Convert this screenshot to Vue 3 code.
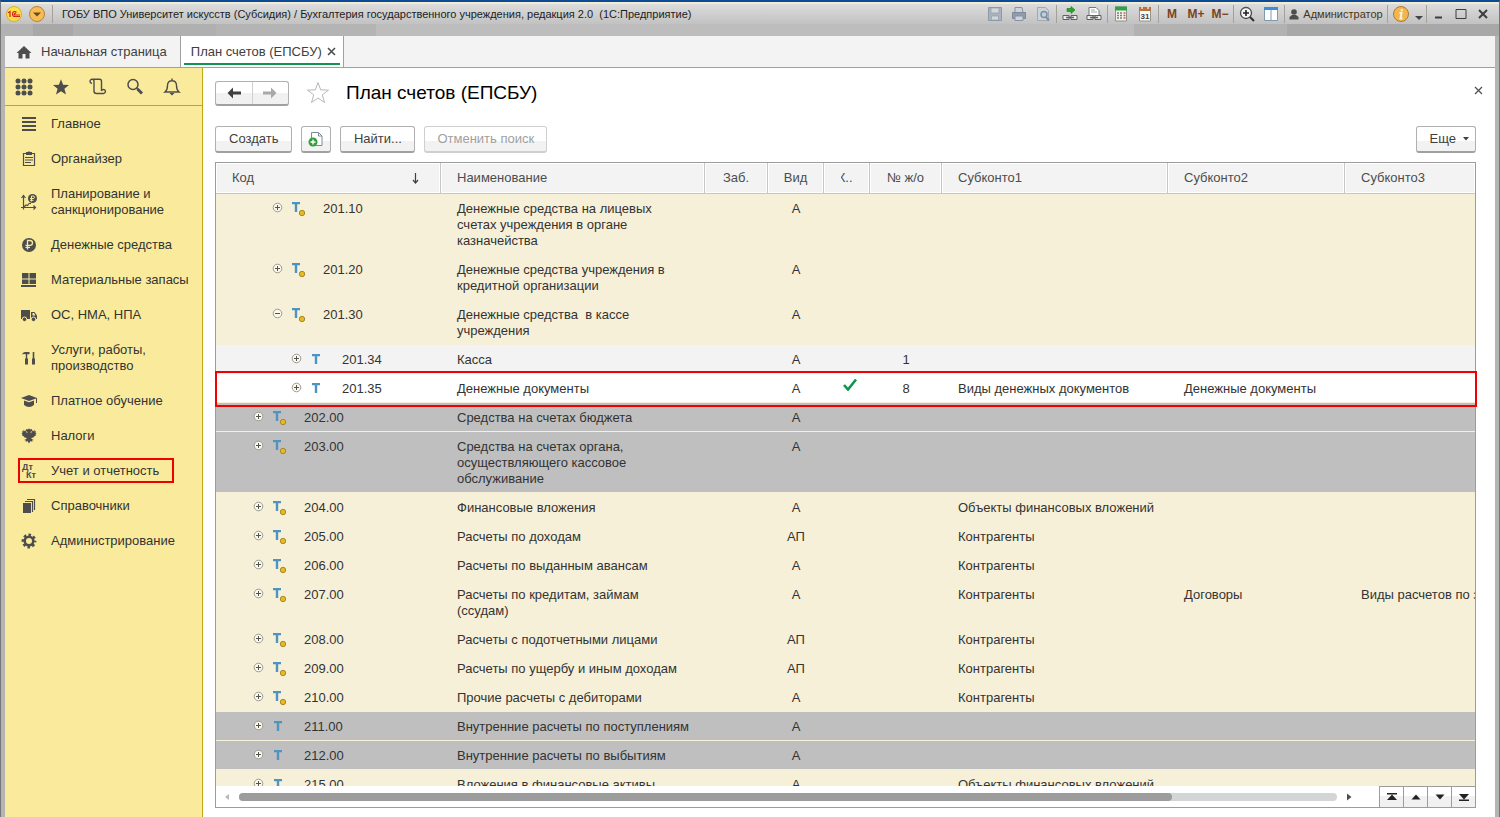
<script setup>
const sections = [
  { icon: 'menu', label: 'Главное' },
  { icon: 'clip', label: 'Органайзер' },
  { icon: 'plan', label: 'Планирование и\nсанкционирование' },
  { icon: 'ruble', label: 'Денежные средства' },
  { icon: 'stock', label: 'Материальные запасы' },
  { icon: 'truck', label: 'ОС, НМА, НПА' },
  { icon: 'tools', label: 'Услуги, работы,\nпроизводство' },
  { icon: 'edu', label: 'Платное обучение' },
  { icon: 'eagle', label: 'Налоги' },
  { icon: 'dtkt', label: 'Учет и отчетность', marked: true },
  { icon: 'books', label: 'Справочники' },
  { icon: 'gear', label: 'Администрирование' },
]

const rows = [
  { level: 3, coin: true, code: '201.10', name: 'Денежные средства на лицевых\nсчетах учреждения в органе\nказначейства', kind: 'А' },
  { level: 3, coin: true, code: '201.20', name: 'Денежные средства учреждения в\nкредитной организации', kind: 'А' },
  { level: 3, coin: true, open: true, code: '201.30', name: 'Денежные средства  в кассе\nучреждения', kind: 'А' },
  { level: 4, code: '201.34', name: 'Касса', kind: 'А', journal: '1', tone: 'light' },
  { level: 4, code: '201.35', name: 'Денежные документы', kind: 'А', check: true, journal: '8', sub1: 'Виды денежных документов', sub2: 'Денежные документы', tone: 'current' },
  { level: 2, coin: true, code: '202.00', name: 'Средства на счетах бюджета', kind: 'А', tone: 'grey' },
  { level: 2, coin: true, code: '203.00', name: 'Средства на счетах органа,\nосуществляющего кассовое\nобслуживание', kind: 'А', tone: 'grey' },
  { level: 2, coin: true, code: '204.00', name: 'Финансовые вложения', kind: 'А', sub1: 'Объекты финансовых вложений' },
  { level: 2, coin: true, code: '205.00', name: 'Расчеты по доходам', kind: 'АП', sub1: 'Контрагенты' },
  { level: 2, coin: true, code: '206.00', name: 'Расчеты по выданным авансам', kind: 'А', sub1: 'Контрагенты' },
  { level: 2, coin: true, code: '207.00', name: 'Расчеты по кредитам, займам\n(ссудам)', kind: 'А', sub1: 'Контрагенты', sub2: 'Договоры', sub3: 'Виды расчетов по займам' },
  { level: 2, coin: true, code: '208.00', name: 'Расчеты с подотчетными лицами', kind: 'АП', sub1: 'Контрагенты' },
  { level: 2, coin: true, code: '209.00', name: 'Расчеты по ущербу и иным доходам', kind: 'АП', sub1: 'Контрагенты' },
  { level: 2, coin: true, code: '210.00', name: 'Прочие расчеты с дебиторами', kind: 'А', sub1: 'Контрагенты' },
  { level: 2, code: '211.00', name: 'Внутренние расчеты по поступлениям', kind: 'А', tone: 'grey' },
  { level: 2, code: '212.00', name: 'Внутренние расчеты по выбытиям', kind: 'А', tone: 'grey' },
  { level: 2, code: '215.00', name: 'Вложения в финансовые активы', kind: 'А', sub1: 'Объекты финансовых вложений' },
]
</script>

<template>
  <div class="window">
    <header class="titlebar">
      <span class="logo"><svg width="16" height="16" viewBox="0 0 16 16"><circle cx="8" cy="8" r="7.5" fill="#fbe04a" stroke="#d9ae2a" /><path d="M2 6.800 4 5.500V11M10.500 6.500C9.500 5 6.500 5.200 6.500 8q0 2.500 2.500 2.500h5M9.800 7.300Q8.300 7.300 8.300 8.200t1.200.8H14" fill="none" stroke="#d8201a" stroke-width="1.200" /></svg></span>
      <button class="orb" aria-label="Главное меню"><svg width="16" height="16" viewBox="0 0 16 16"><circle cx="8" cy="8" r="7.500" fill="#f7bd55" stroke="#b88430" /><path d="M4 6.500h8L8 10.500z" fill="#6a4a20" /></svg></button>
      <i class="sep"></i>
      <span class="wtitle">ГОБУ ВПО Университет искусств (Субсидия) / Бухгалтерия государственного учреждения, редакция 2.0&nbsp; (1С:Предприятие)</span>
      <div class="tools">
        <button class="tb" aria-label="Сохранить" disabled><svg width="16" height="16" viewBox="0 0 16 16"><path d="M1.500 1.500h13v13h-13z" fill="#aab3be" stroke="#8e99a6" /><path d="M4 2h8v5H4zM4.500 10h7v4h-7z" fill="#d3d7dc" stroke="#939dab" stroke-width=".7" /></svg></button>
        <button class="tb" aria-label="Печать" disabled><svg width="16" height="16" viewBox="0 0 16 16"><path d="M4 1.500h7l1 5H4z" fill="#cfd4da" stroke="#8792a0" /><path d="M1.500 6.500h13v6h-13z" fill="#8f9cab" stroke="#7e8a99" /><path d="M4 10h8v4.500H4z" fill="#cfd4da" stroke="#8792a0" /></svg></button>
        <button class="tb" aria-label="Просмотр" disabled><svg width="16" height="16" viewBox="0 0 16 16"><path d="M2.500 1.500h8l3 3v10h-11z" fill="#cdd2d8" stroke="#a0a8b2" /><circle cx="9" cy="8.500" r="3" fill="#bcd0dd" stroke="#7f8fa2" stroke-width="1.500" /><path d="m11 11 3 3.500" stroke="#7f8fa2" stroke-width="2" /></svg></button>
        <i class="sep"></i>
        <button class="tb" aria-label="Получить ссылку"><svg width="16" height="16" viewBox="0 0 16 16"><path d="M5 2.500h4V.5l4 3.500-4 3.500v-2H5z" fill="#2aa528" stroke="#167a18" stroke-width=".6" /><path d="M1 9.500h6v4H1zM9 9.500h6v4H9z" fill="#eee" stroke="#5c6063" /><path d="M4 11.500h8" stroke="#5c6063" stroke-width="1.500" /></svg></button>
        <button class="tb" aria-label="Перейти по ссылке"><svg width="16" height="16" viewBox="0 0 16 16"><path d="M3 1.500h7l3 3v5H3z" fill="#fff" stroke="#73787d" /><path d="M5 4h4M5 6h6" stroke="#a0a6ab" /><path d="M1 9.500h6v4H1zM9 9.500h6v4H9z" fill="#eee" stroke="#5c6063" /><path d="M4 11.500h8" stroke="#5c6063" stroke-width="1.500" /></svg></button>
        <i class="sep"></i>
        <button class="tb" aria-label="Калькулятор"><svg width="16" height="16" viewBox="0 0 16 16"><path d="M2.500 1h11v14h-11z" fill="#f3f3ee" stroke="#8b9589" /><path d="M2 .5h12v4H2z" fill="#32a04a" /><path d="M4 7h2M7 7h2M4 9.500h2M7 9.500h2M4 12h2M7 12h2" stroke="#7b8078" stroke-width="1.300" /><path d="M10.500 7h2M10.500 9.500h2M10.500 12h2" stroke="#d35a4a" stroke-width="1.300" /></svg></button>
        <button class="tb" aria-label="Календарь"><svg width="16" height="16" viewBox="0 0 16 16"><path d="M2.500 2h11v13h-11z" fill="#fbfbf8" stroke="#999287" /><path d="M2 1h12v4H2z" fill="#b87343" /><path d="M5 0v3M11 0v3" stroke="#f0dfd0" stroke-width="1.500" /><text x="8" y="13" text-anchor="middle" class="cal">31</text></svg></button>
        <i class="sep"></i>
        <button class="tb mem">M</button><button class="tb mem">M+</button><button class="tb mem">M−</button>
        <i class="sep"></i>
        <button class="tb" aria-label="Масштаб"><svg width="16" height="16" viewBox="0 0 16 16"><circle cx="7" cy="7" r="5.500" fill="#f6f6f2" stroke="#4a4a4a" stroke-width="1.300" /><path d="M4 7h6M7 4v6" stroke="#222" stroke-width="1.600" /><path d="m11 11 4 4" stroke="#333" stroke-width="2.200" /></svg></button>
        <button class="tb" aria-label="Панели"><svg width="16" height="16" viewBox="0 0 16 16"><path d="M1.500 2h13v12.500h-13zM8 3v11" fill="#fff" stroke="#7e9ab0" /><path d="M1 1h14v3H1z" fill="#3a8ddb" /></svg></button>
        <i class="sep"></i>
        <button class="user"><svg width="10" height="11" viewBox="0 0 10 11"><circle cx="5" cy="3" r="2.800" fill="#4d4d4d" /><path d="M.5 10.500V8L3 6h4l2.500 2v2.500z" fill="#4d4d4d" /></svg>Администратор</button>
        <i class="sep"></i>
        <button class="tb" aria-label="Сведения"><svg width="16" height="16" viewBox="0 0 16 16"><circle cx="8" cy="8" r="7.500" fill="#f4b64c" stroke="#a97b34" /><path d="M8.800 3v2.200M6.500 7h2L7.500 12.500h2" fill="none" stroke="#fff3d8" stroke-width="2" /></svg></button>
        <button class="tb narrow" aria-label="Еще"><svg width="8" height="16" viewBox="0 0 8 16"><path d="M0 10h8L4 14z" fill="#444" /></svg></button>
        <i class="sep"></i>
        <button class="tb win" aria-label="Свернуть"><svg width="12" height="12" viewBox="0 0 12 12"><path d="M2 9.500h7" stroke="#3d3d3d" stroke-width="2" /></svg></button>
        <button class="tb win" aria-label="Развернуть"><svg width="12" height="12" viewBox="0 0 12 12"><path d="M1 1.500h10v9H1z" fill="none" stroke="#3d3d3d" /></svg></button>
        <button class="tb win" aria-label="Закрыть"><svg width="12" height="12" viewBox="0 0 12 12"><path d="m2 2 8 8M10 2l-8 8" stroke="#3d3d3d" stroke-width="2" /></svg></button>
      </div>
    </header>
    <div class="band"></div>

    <div class="frame">
      <nav class="tabs">
        <button class="tab home"><svg width="16" height="14" viewBox="0 0 16 14"><path d="M8 1 .5 8h2v5.500h4V9h3v4.500h4V8h2z" fill="#4d4d4d" /></svg>Начальная страница</button>
        <button class="tab active">План счетов (ЕПСБУ)<svg width="9" height="9" viewBox="0 0 9 9"><path d="m1 1 7 7M8 1 1 8" stroke="#4d4d4d" stroke-width="1.600" /></svg></button>
      </nav>

      <div class="body">
        <aside class="side">
          <div class="quick">
            <button aria-label="Все функции"><svg width="18" height="18" viewBox="0 0 18 18" fill="#4d4d4d"><circle v-for="n in 9" :key="n" :cx="3 + ((n - 1) % 3) * 6" :cy="3 + Math.floor((n - 1) / 3) * 6" r="2.500" /></svg></button>
            <button aria-label="Избранное"><svg width="18" height="18" viewBox="0 0 18 18"><path d="m9 1.200 2.100 5.500 5.900.3-4.600 3.700 1.600 5.700L9 13.200l-5 3.200 1.600-5.700L1 7l5.900-.3z" fill="#4d4d4d" /></svg></button>
            <button aria-label="История"><svg width="18" height="18" viewBox="0 0 18 18" fill="none" stroke="#4d4d4d" stroke-width="1.400"><path d="M3 5.300A2 2 0 1 1 5 3.300V13q0 2.500 2.500 2.500H15M3 1.300h7.500q2 0 2 2V13M12.500 13a2 2 0 1 1 2.500 2.400" /></svg></button>
            <button aria-label="Поиск"><svg width="18" height="18" viewBox="0 0 18 18" fill="none" stroke="#4d4d4d"><circle cx="7" cy="6.500" r="5" stroke-width="1.500" /><path d="m10.500 10 1.500 1.500" stroke-width="1.500" /><path d="m11.500 11 4.500 4.500" stroke-width="3" /></svg></button>
            <button aria-label="Оповещения"><svg width="18" height="18" viewBox="0 0 18 18" fill="none" stroke="#4d4d4d" stroke-width="1.400"><path d="M2 14c2.500-2 2.500-4 2.500-6.500C4.500 4.500 6 2.800 9 2.800s4.500 1.700 4.500 4.700c0 2.500 0 4.500 2.500 6.500zM9 .5v2.300" /><path d="M6.500 15h5L9 17.500z" fill="#4d4d4d" stroke="none" /></svg></button>
          </div>
          <ul class="menu">
            <li v-for="s in sections" :key="s.label" :class="{ marked: s.marked }">
              <a href="#">
                <svg width="16" height="16" viewBox="0 0 16 16" fill="#4d4d4d" stroke="#4d4d4d" stroke-width="0">
                  <path v-if="s.icon === 'menu'" d="M1 1h14v2H1zM1 5h14v2H1zM1 9h14v2H1zM1 13h14v2H1z" />
                  <g v-else-if="s.icon === 'clip'"><path d="M2.500 2.500h11v12h-11z" fill="none" stroke-width="1.200" /><path d="M5 1h2q1-1.500 2 0h2v3H5zM4 6h8v1H4zM4 8.500h8v1H4zM4 11h6v1H4z" /></g>
                  <g v-else-if="s.icon === 'plan'"><path d="M2.500 15.500V2M0 13.500h14M.500 4l2-2.500 2 2.500M12.500 11.500l2 2-2 2M2.500 13.500 5 11l1.500.5L8 9.500h2" fill="none" stroke-width="1.200" /><circle cx="11.500" cy="4.500" r="4.500" /><path d="M10.500 7.500v-5.500h1.500q1.500 0 1.500 1.300T12 4.500H9M9 6.300h3.500" fill="none" stroke="#faeb9c" stroke-width="1" /></g>
                  <g v-else-if="s.icon === 'ruble'"><circle cx="8" cy="8" r="7" /><path d="M6.500 12.500v-9h2.500q2.500 0 2.500 2.400T9 8.300H4.500M4.500 10.300H9" fill="none" stroke="#faeb9c" stroke-width="1.300" /></g>
                  <path v-else-if="s.icon === 'stock'" d="M1 1h6.500v5.500H1zM8.500 1H15v5.500H8.500zM1 7.500h6.500V12H1zM8.500 7.500H15V12H8.500zM0 13h15v2H0z" />
                  <g v-else-if="s.icon === 'truck'"><path d="M0 3h9v9H0zM10 5h3.500L16 8.500V12h-6z" /><circle cx="3.500" cy="12.300" r="2.300" stroke="#faeb9c" stroke-width="1" /><circle cx="12.500" cy="12.300" r="2.300" stroke="#faeb9c" stroke-width="1" /><path d="M11.500 6h1.500l1.500 2.500h-3z" fill="#faeb9c" /></g>
                  <path v-else-if="s.icon === 'tools'" d="M1 4.500Q2 1.500 4.500 2h4v2.300H6.200V8.500H7V14.500H4V8.500h.8V4.300Q2.500 3.500 1 4.500zM11.700 2h1.600v6.500H14v6h-3v-6h.7z" />
                  <path v-else-if="s.icon === 'edu'" d="M8 2 0 5l8 3 7-2.600V10h1V5zM3 7.500V12q5 4 10 0V7.500L8 9.300z" />
                  <path v-else-if="s.icon === 'eagle'" d="m5 1 1.500.5L8 .5l1.500 1L11 1v2L9.500 4l.5 1.500 1.500-3.500.5 1.500 1.500-2v2L15 3l-.5 2 1 .2-1 1.500.5.800-2 1-.5 1-2.500.5 1.500 1.500 1.500.5-2 .5.5 1.500-2-1L8 15.500 6.500 13l-2 1 .5-1.500-2-.5 1.500-.5L6 10l-2.500-.5-.5-1-2-1 .5-.8-1-1.500 1-.2L1 3l1.500.5v-2l1.500 2 .5-1.500L6 5.500 6.500 4 5 3z" />
                  <g v-else-if="s.icon === 'dtkt'" class="dk"><text x="1" y="7">Дт</text><text x="5" y="15">Кт</text></g>
                  <g v-else-if="s.icon === 'books'"><path d="M2 5h8v10H2z" /><path d="M4 3.500h7.500V14M6 1.500h7.500V12" fill="none" stroke-width="1.200" /></g>
                  <g v-else><circle cx="8" cy="8" r="4.300" fill="none" stroke-width="2.600" /><circle cx="8" cy="8" r="6.200" fill="none" stroke-width="2.400" stroke-dasharray="2.600 2.270" stroke-dashoffset="1.300" /></g>
                </svg>
                <span>{{ s.label }}</span>
              </a>
            </li>
          </ul>
        </aside>

        <main class="page">
          <div class="head">
            <div class="nav">
              <button aria-label="Назад"><svg width="16" height="12" viewBox="0 0 16 12"><path d="M7 .500 1.500 6 7 11.500V7.500h8v-3H7z" fill="#404040" /></svg></button>
              <button aria-label="Вперед"><svg width="16" height="12" viewBox="0 0 16 12"><path d="M9 .500 14.500 6 9 11.500V7.500H1v-3h8z" fill="#a8a8a8" /></svg></button>
            </div>
            <button class="fav" aria-label="В избранное"><svg width="24" height="24" viewBox="0 0 24 24"><path d="m12 1.500 2.700 7.400 7.800.2-6.200 4.800 2.200 7.600L12 17l-6.500 4.500 2.200-7.600L1.500 9.100l7.800-.2z" fill="#fff" stroke="#b4b8bc" /></svg></button>
            <h1>План счетов (ЕПСБУ)</h1>
            <button class="close" aria-label="Закрыть"><svg width="9" height="9" viewBox="0 0 9 9"><path d="m1 1 7 7M8 1 1 8" stroke="#4d4d4d" stroke-width="1.200" /></svg></button>
          </div>

          <div class="cmds">
            <button class="btn">Создать</button>
            <button class="btn square" aria-label="Создать копированием"><svg width="16" height="16" viewBox="0 0 16 16"><path d="M3.500 1.500h7l3.500 3.500v9.500H3.500z" fill="#fff" stroke="#7d8c99" /><path d="M10.500 1.500V5H14" fill="none" stroke="#7d8c99" /><circle cx="5" cy="11" r="4.500" fill="#2f9e3b" /><path d="M2.500 11h5M5 8.500v5" stroke="#fff" stroke-width="1.400" /></svg></button>
            <button class="btn find">Найти...</button>
            <button class="btn" disabled>Отменить поиск</button>
            <button class="btn more">Еще<svg width="6" height="4" viewBox="0 0 6 4"><path d="M0 0h6L3 3.500z" fill="#404040" /></svg></button>
          </div>

          <div class="grid">
            <div class="clip">
              <table>
                <colgroup><col class="c1" /><col class="c2" /><col class="c3" /><col class="c4" /><col class="c5" /><col class="c6" /><col class="c7" /><col class="c8" /><col /></colgroup>
                <thead>
                  <tr>
                    <th><div class="sorted">Код<svg width="7" height="11" viewBox="0 0 7 11"><path d="M3.500 0v9.500M1 7l2.500 3L6 7" fill="none" stroke="#404040" stroke-width="1.200" /></svg></div></th>
                    <th>Наименование</th>
                    <th class="mid">Заб.</th>
                    <th class="mid">Вид</th>
                    <th class="mid"><span class="cut">К..</span></th>
                    <th class="mid">№ ж/о</th>
                    <th>Субконто1</th>
                    <th>Субконто2</th>
                    <th>Субконто3</th>
                  </tr>
                </thead>
                <tbody>
                  <tr v-for="r in rows" :key="r.code" :class="r.tone">
                    <td class="codecell">
                      <div :class="['code', 'l' + r.level]">
                        <button class="exp" :aria-label="r.open ? 'Свернуть' : 'Развернуть'"><svg width="11" height="11" viewBox="0 0 11 11"><circle cx="5.500" cy="5.500" r="4.300" fill="#fbf8ec" stroke="#9c9a92" /><path :d="r.open ? 'M3 5.500h5' : 'M3 5.500h5M5.500 3v5'" stroke="#55534e" /></svg></button>
                        <svg width="16" height="16" viewBox="0 0 16 16">
                          <g v-if="r.coin"><path d="M1 1h8v2.200H6.200V11H3.800V3.200H1z" fill="#4f93c0" /><circle cx="11" cy="12" r="2.700" fill="#e6bb1e" stroke="#a88a2c" /></g>
                          <path v-else d="M2 2h8v2.200H7.200V12H4.800V4.200H2z" fill="#4f93c0" />
                        </svg>
                        <span>{{ r.code }}</span>
                      </div>
                    </td>
                    <td>{{ r.name }}</td>
                    <td></td>
                    <td class="mid">{{ r.kind }}</td>
                    <td class="tickcell"><svg v-if="r.check" class="tick" width="14" height="13" viewBox="0 0 14 13"><path d="m1 7 4 4.500 8-10" fill="none" stroke="#0f9550" stroke-width="2.600" /></svg></td>
                    <td class="mid">{{ r.journal }}</td>
                    <td>{{ r.sub1 }}</td>
                    <td>{{ r.sub2 }}</td>
                    <td>{{ r.sub3 }}</td>
                  </tr>
                </tbody>
              </table>
            </div>
            <div class="foot">
              <svg width="6" height="8" viewBox="0 0 6 8"><path d="M5 1v6L1 4z" fill="#b9b9b9" /></svg>
              <div class="track"><div class="thumb"></div></div>
              <svg width="6" height="8" viewBox="0 0 6 8"><path d="M1 0.500v7L5.500 4z" fill="#4d4d4d" /></svg>
              <div class="jump">
                <button aria-label="В начало"><svg width="10" height="8" viewBox="0 0 10 8"><path d="M0 0h10v1.500H0zM5 1.500 10 7H0z" fill="#222" /></svg></button>
                <button aria-label="Вверх"><svg width="10" height="8" viewBox="0 0 10 8"><path d="m5 1.500 4.500 5h-9z" fill="#222" /></svg></button>
                <button aria-label="Вниз"><svg width="10" height="8" viewBox="0 0 10 8"><path d="M.500 1.500h9L5 6.500z" fill="#222" /></svg></button>
                <button aria-label="В конец"><svg width="10" height="8" viewBox="0 0 10 8"><path d="M0 1h10L5 6.500zM0 6.500h10V8H0z" fill="#222" /></svg></button>
              </div>
            </div>
            <div class="highlight"></div>
          </div>
        </main>
      </div>
    </div>
  </div>
</template>

<style>
body { margin: 0; background: #b0b0b0; }
</style>

<style scoped>
* { box-sizing: border-box; }
button { font: inherit; color: inherit; background: none; border: 0; padding: 0; margin: 0; display: flex; align-items: center; justify-content: center; }
svg { display: block; flex: none; }
.window {
  height: 100vh; display: flex; flex-direction: column; overflow: hidden;
  font: 13px/16px "Liberation Sans", Arial, sans-serif; color: #333;
  border-top: 2px solid #0b4a94; border-left: 1px solid #777; border-right: 1px solid #777;
  background: #b4b4b4;
}
.titlebar {
  height: 22px; flex: none; display: flex; align-items: center; padding: 0 5px;
  border-top: 2px solid #f2ecd4; background: linear-gradient(#dcdcdc, #c2c2c2);
  color: #1c1c1c; font-size: 11px;
}
.logo { margin-right: 7px; }
.orb { margin-right: 6px; }
.sep { width: 1px; height: 18px; margin: 0 1px; background: #a4a298; flex: none; }
.wtitle { margin-left: 8px; white-space: nowrap; flex: 1; min-width: 0; overflow: hidden; }
.tools { display: flex; align-items: center; }
.tb { width: 24px; height: 18px; }
.mem { color: #7c431f; font-weight: bold; font-size: 12px; }
.narrow { width: 12px; }
.win { width: 22px; }
.user { width: 100px; gap: 4px; color: #4a3413; }
.cal { font: bold 8px "Liberation Sans", sans-serif; fill: #444; }
.band { height: 12px; flex: none; background: linear-gradient(90deg, #b2b2b2 0 32px, #a8a8a8 32px 72px, #b0b0b0 72px 215px, #b4b4b4 215px 375px, #bdbdbd 375px 1133px, #b2b2b2 1133px 1286px, #a8a8a8 1286px); }
.frame { flex: 1; min-height: 0; margin: 0 4px; display: flex; flex-direction: column; background: #fff; }
.tabs { height: 32px; flex: none; display: flex; background: #f3f3f3; border-bottom: 1px solid #a0a0a0; }
.tab { border-right: 1px solid #a0a0a0; color: #404040; }
.home { padding: 0 13px 0 11px; gap: 9px; }
.active { background: #fff; position: relative; padding: 0 7px 0 10px; gap: 5px; }
.active::after { content: ""; position: absolute; left: 3px; right: 3px; bottom: 2px; height: 2px; background: #0f9550; }
.body { flex: 1; min-height: 0; display: flex; }
.side { width: 198px; flex: none; background: #faeb9c; border-right: 1px solid #bfa913; }
.quick { height: 38px; display: flex; align-items: center; gap: 19px; padding-left: 10px; border-bottom: 1px solid #bfa913; }
.menu { list-style: none; margin: 1px 0 0; padding: 0; }
.menu a { display: flex; align-items: center; gap: 14px; padding: 9px 0 10px 16px; color: #333; text-decoration: none; white-space: pre-line; }
.marked { position: relative; }
.marked::after { content: ""; box-sizing: border-box; position: absolute; left: 13px; top: 4px; width: 156px; height: 25px; border: 2px solid #f00000; }
.dk { font: bold 9px "Liberation Sans", sans-serif; }
.page { flex: 1; min-width: 0; display: flex; flex-direction: column; padding: 12px 19px 9px 12px; }
.head { display: flex; align-items: center; height: 26px; }
.nav { display: flex; width: 74px; height: 25px; border: 1px solid #b0b0b0; border-bottom: 2px solid #a0a0a0; border-radius: 3px; background: linear-gradient(#fff 50%, #f1f1f1 50%); }
.nav button { flex: 1; }
.nav button + button { border-left: 1px solid #d0d0d0; }
.fav { margin-left: 17px; }
h1 { margin: 0 0 0 16px; font-weight: normal; font-size: 19px; line-height: 26px; color: #000; }
.close { margin: 0 -10px 0 auto; width: 15px; height: 20px; align-self: flex-start; }
.cmds { display: flex; margin: 20px 0 9px; }
.btn { height: 27px; padding: 0 13px; margin-right: 9px; border: 1px solid #b0b0b0; border-bottom: 2px solid #a0a0a0; border-radius: 3px; background: linear-gradient(#fff 60%, #f2f2f2 60%); color: #404040; white-space: nowrap; }
.btn:disabled { padding: 0 12px; color: #a0a0a0; border-color: #cfcfcf; }
.square { width: 30px; padding: 0; }
.find { width: 75px; }
.more { margin: 0 0 0 auto; gap: 7px; padding: 0 6px 0 13px; }
.grid { flex: 1; min-height: 0; display: flex; flex-direction: column; position: relative; border: 1px solid #9c9c9c; background: #fff; }
.clip { flex: 1; min-height: 0; overflow: hidden; background: #f7f0d8; }
table { width: 100%; table-layout: fixed; border-collapse: separate; border-spacing: 0; }
.c1 { width: 225px; } .c2 { width: 264px; } .c3 { width: 63px; } .c4 { width: 56px; } .c5 { width: 46px; }
.c6 { width: 72px; } .c7 { width: 226px; } .c8 { width: 177px; }
th { height: 31px; padding: 0 0 0 16px; text-align: left; font-weight: normal; color: #4d4d4d; background: #f3f3f3; border-right: 1px solid #c6c6c6; border-bottom: 1px solid #c6c6c6; box-shadow: inset 0 0 0 1px #fff; white-space: nowrap; }
th:last-child { border-right: 0; }
th.mid, td.mid { text-align: center; padding-left: 0; padding-right: 0; }
.sorted { display: flex; align-items: center; justify-content: space-between; padding-right: 21px; }
.cut { display: inline-flex; justify-content: flex-end; width: 12px; overflow: hidden; vertical-align: top; }
td { padding: 7px 0 5px 16px; vertical-align: top; white-space: pre; overflow: hidden; border-bottom: 1px solid #f7f0d8; background: #f7f0d8; line-height: 16px; }
td.codecell { padding-left: 0; }
.code { display: flex; align-items: flex-start; height: 16px; }
.code span { margin-left: 16px; }
.exp { margin: 1px 8px 0 0; }
.l2 { padding-left: 37px; } .l3 { padding-left: 56px; } .l4 { padding-left: 75px; }
.light td { background: #f3f3f3; }
.current td { background: #fff; }
.grey td { background: #bfbfbf; }
td.tickcell { padding: 4px 0 0 19px; }
.foot { height: 21px; flex: none; display: flex; align-items: center; background: #fff; padding-left: 8px; }
.track { flex: 1; height: 8px; margin: 0 9px; border-radius: 4px; background: #d4d5d7; }
.thumb { width: 85%; height: 8px; border-radius: 4px; background: #9c9c9c; }
.jump { display: flex; margin-left: 27px; align-self: stretch; border-top: 1px solid #9c9c9c; }
.jump button { width: 24px; border-left: 1px solid #9c9c9c; background: linear-gradient(#fff 45%, #f1f1f1 45%); }
.highlight { position: absolute; left: -1px; right: -2px; top: 208px; height: 36px; border: 2px solid #f00000; pointer-events: none; }
</style>
